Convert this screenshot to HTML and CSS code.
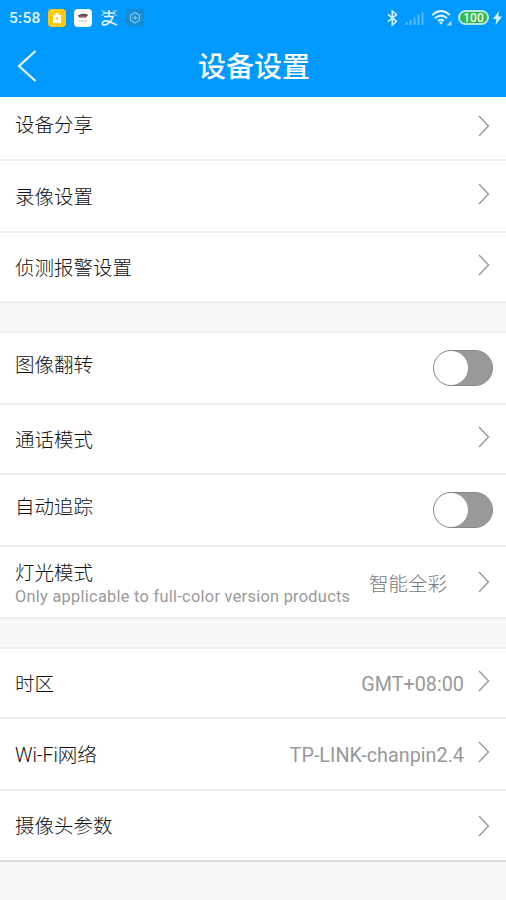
FILE: index.html
```html
<!DOCTYPE html>
<html lang="zh-CN">
<head>
    <meta charset="UTF-8">
    <meta name="viewport" content="width=device-width, initial-scale=1.0">
    <title>设备设置</title>
    <link rel="stylesheet" href="styles.css">
</head>
<body>
    <!-- Shared icons -->
    <svg class="sprite" width="0" height="0">
        <symbol id="arrow" viewBox="0 0 12 22">
            <path d="M1 1 L10.5 11 L1 21" fill="none" stroke="#999" stroke-width="1.4"/>
        </symbol>
    </svg>

    <header class="header">
        <div class="status-bar">
            <span class="time">5:58</span>
            <svg class="app-icon" viewBox="0 0 18 18">
                <rect width="18" height="18" rx="4" fill="#ffc90d"/>
                <path d="M5 6h2.5V4h3v2H13v8H5z" fill="#fff"/>
                <path d="M9 8v3M7.8 9.5h2.4" stroke="#ffc90d" stroke-width="1.2"/>
            </svg>
            <svg class="app-icon" viewBox="0 0 18 18">
                <rect width="18" height="18" rx="4" fill="#fff"/>
                <path d="M4 6.5q5-3 10-.5l-2 2.5H5.5z" fill="#443b45"/>
                <path d="M6 7.2h6" stroke="#d8606d" stroke-width="1.2"/>
                <path d="M4.5 12h9" stroke="#aaa" stroke-dasharray="2 1"/>
            </svg>
            <svg class="app-icon" viewBox="0 0 18 18">
                <path d="M1 2h4M13 2h4M1 6h3M14 6h3" stroke="#55b9f5" stroke-width="2"/>
                <path d="M3 4h12M9 1v6M4 7.5h10M13 7.5Q11 14 5 16Q1.5 16 2.5 13.5Q5 10.5 10 13L17 16" fill="none" stroke="#e8f7ff" stroke-width="1.6"/>
            </svg>
            <svg class="app-icon" viewBox="0 0 18 18">
                <rect width="18" height="17" rx="2" fill="#158bd3"/>
                <path d="M9 3.5l4.5 2.7v5L9 14l-4.5-2.8v-5z" fill="none" stroke="#7bc8ec" stroke-width="1.3"/>
                <path d="M6.5 8.8h5M9 6.5v4.5" stroke="#7bc8ec" stroke-width="1.2"/>
            </svg>
            <div class="status-right">
                <svg width="11" height="16" viewBox="0 0 11 16">
                    <path d="M1 4.3l8.5 7L5.3 15V1l4.2 3.7L1 11.7" fill="none" stroke="#d6f0ff" stroke-width="1.6"/>
                </svg>
                <svg class="signal" width="19" height="14" viewBox="0 0 19 14">
                    <path d="M1.5 14v-3M5.5 14v-5M9.5 14V6.5M13.5 14V3.5M17.5 14V1" stroke="#58baf8" stroke-width="2"/>
                </svg>
                <svg class="wifi" width="21" height="17" viewBox="0 0 21 17">
                    <path d="M1.2 6Q10 -2 18.8 6M4 9.2Q10 4 16 9.2M7 12Q10 9.6 13 12" fill="none" stroke="#e4f5ff" stroke-width="2"/>
                    <path d="M8 13.3q2-1.5 4 0l-2 2.2z" fill="#e4f5ff"/>
                    <path d="M20.5 11.5v5h-5z" fill="#a9dcfb"/>
                </svg>
                <span class="battery">100</span>
                <svg class="bolt" width="9" height="14" viewBox="0 0 9 14">
                    <path d="M6 0L0 8h3.5L2.5 14L9 5.5H5.2z" fill="#e4f5ff"/>
                </svg>
            </div>
        </div>
        <div class="title-bar">
            <svg class="back" width="20" height="32" viewBox="0 0 20 32">
                <path d="M18.5 1 L2 16 L18.5 31" fill="none" stroke="#e9f7ff" stroke-width="2.2"/>
            </svg>
            <h1>设备设置</h1>
        </div>
    </header>

    <main>
        <section class="group first">
            <div class="row short">
                <span class="label raised">设备分享</span>
                <svg class="arrow raised"><use href="#arrow"/></svg>
            </div>
            <div class="row">
                <span class="label">录像设置</span>
                <svg class="arrow raised"><use href="#arrow"/></svg>
            </div>
            <div class="row medium">
                <span class="label">侦测报警设置</span>
                <svg class="arrow raised"><use href="#arrow"/></svg>
            </div>
        </section>

        <section class="group">
            <div class="row">
                <span class="label raised">图像翻转</span>
                <span class="switch"></span>
            </div>
            <div class="row medium">
                <span class="label">通话模式</span>
                <svg class="arrow raised"><use href="#arrow"/></svg>
            </div>
            <div class="row">
                <span class="label raised">自动追踪</span>
                <span class="switch"></span>
            </div>
            <div class="row light-mode">
                <div class="text">
                    <span class="label">灯光模式</span>
                    <span class="hint">Only applicable to full-color version products</span>
                </div>
                <span class="value">智能全彩</span>
                <svg class="arrow"><use href="#arrow"/></svg>
            </div>
        </section>

        <section class="group">
            <div class="row medium">
                <span class="label">时区</span>
                <span class="value">GMT+08:00</span>
                <svg class="arrow raised"><use href="#arrow"/></svg>
            </div>
            <div class="row">
                <span class="label">Wi-Fi网络</span>
                <span class="value">TP-LINK-chanpin2.4</span>
                <svg class="arrow raised"><use href="#arrow"/></svg>
            </div>
            <div class="row last">
                <span class="label">摄像头参数</span>
                <svg class="arrow"><use href="#arrow"/></svg>
            </div>
        </section>
    </main>
</body>
</html>
```
FILE: styles.css
```css
* {
    box-sizing: border-box;
}

body {
    margin: 0;
    height: 900px;
    overflow: hidden;
    background-color: #f8f8f8;
    color: #111;
    font-family: Roboto, "Noto Sans CJK SC", sans-serif;
    font-size: 19.5px;
}

svg {
    display: block;
    flex-shrink: 0;
}

.sprite {
    position: absolute;
}

/* Header */
.header {
    height: 97px;
    background-color: #0099ff;
    color: #fff;
}

.status-bar {
    display: flex;
    align-items: center;
    height: 35px;
    padding-left: 9px;
    padding-right: 4px;
}

.time {
    width: 39px;
    font-size: 15.5px;
    font-weight: 500;
    letter-spacing: 0.3px;
    color: #e4f5ff;
}

.app-icon {
    width: 18px;
    height: 18px;
    margin-right: 8px;
}

.status-right {
    display: flex;
    align-items: center;
    margin-left: auto;
}

.signal {
    margin-left: 7px;
}

.wifi {
    margin-left: 7px;
}

.battery {
    width: 31px;
    height: 15px;
    margin-left: 6px;
    border: 2px solid #b5e7e0;
    border-radius: 8px;
    background-color: #35b849;
    color: #effff0;
    font-size: 12px;
    font-weight: 500;
    line-height: 12px;
    text-align: center;
}

.bolt {
    margin-left: 4px;
}

.title-bar {
    display: grid;
    grid-template-columns: 60px 1fr 60px;
    align-items: center;
    height: 62px;
}

.back {
    margin-left: 17px;
}

h1 {
    margin: 0;
    padding-top: 4px;
    padding-left: 2px;
    font-size: 28px;
    font-weight: 500;
    line-height: 40px;
    text-align: center;
}

/* Settings list */
.group {
    margin-top: 28px;
    border-top: 2px solid #eee;
    background-color: #fff;
}

.group.first {
    margin-top: 0;
    border-top: none;
}

.row {
    display: flex;
    align-items: center;
    height: 72px;
    padding: 0 15px;
    border-bottom: 2px solid #eee;
}

.row.short {
    height: 64px;
}

.row.medium {
    height: 70px;
}

.row.last {
    height: 71px;
    border-bottom-color: #ddd;
}

.label {
    padding-top: 3px;
    font-weight: 300;
    line-height: 28px;
}

.label.raised {
    margin-bottom: 7px;
}

.value {
    margin-left: auto;
    margin-right: 14px;
    padding-top: 2px;
    color: #999;
    font-size: 19.8px;
}

.arrow {
    width: 12px;
    height: 22px;
    margin-left: auto;
    margin-right: 1px;
}

.value + .arrow {
    margin-left: 0;
}

.arrow.raised {
    margin-bottom: 5px;
}

.switch {
    width: 60px;
    height: 36px;
    margin-left: auto;
    margin-right: -2px;
    border: 1px solid #888;
    border-radius: 18px;
    background-color: #999;
}

.switch::before {
    content: "";
    display: block;
    width: 34px;
    height: 34px;
    border-radius: 50%;
    background-color: #fff;
}

.text {
    display: flex;
    flex-direction: column;
}

.hint {
    margin-top: -2px;
    color: #999;
    font-size: 16.3px;
    letter-spacing: 0.31px;
    line-height: 22px;
    white-space: nowrap;
}

.light-mode .value {
    margin-right: 31px;
    padding-top: 0;
    color: #777;
    font-size: 19.5px;
    font-weight: 300;
}
```
